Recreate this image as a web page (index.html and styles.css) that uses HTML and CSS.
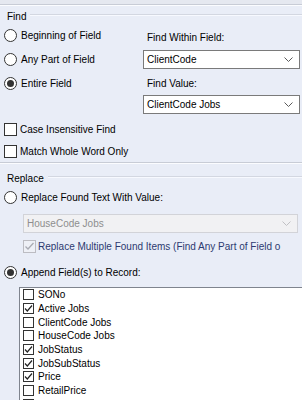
FILE: index.html
```html
<!DOCTYPE html>
<html lang="en">
<head>
  <meta charset="UTF-8" />
  <title>Find and Replace</title>
  <link rel="stylesheet" href="styles.css">
</head>
<body>
  <div class="form">
    <div class="top-strip"></div>
    <div class="etched"></div>

    <!-- Find group -->
    <div class="group-head find-head"><span>Find</span><span class="head-rule"></span></div>
    <div class="find-grid">
      <div class="options">
        <label class="radio-row"><span class="radio"></span>Beginning of Field</label>
        <label class="radio-row"><span class="radio"></span>Any Part of Field</label>
        <label class="radio-row"><span class="radio on"></span>Entire Field</label>
      </div>
      <div class="field-col">
        <div class="field-label first">Find Within Field:</div>
        <div class="combo">
          <span>ClientCode</span>
          <svg class="chevron" width="9" height="5" viewBox="0 0 9 5"><polyline points="0.5,0.5 4.5,4.5 8.5,0.5" /></svg>
        </div>
        <div class="field-label second">Find Value:</div>
        <div class="combo">
          <span>ClientCode Jobs</span>
          <svg class="chevron" width="9" height="5" viewBox="0 0 9 5"><polyline points="0.5,0.5 4.5,4.5 8.5,0.5" /></svg>
        </div>
      </div>
    </div>

    <div class="find-checks">
      <label class="check-row"><span class="check"></span>Case Insensitive Find</label>
      <label class="check-row"><span class="check"></span>Match Whole Word Only</label>
    </div>

    <div class="etched"></div>

    <!-- Replace group -->
    <div class="group-head replace-head"><span>Replace</span><span class="head-rule"></span></div>
    <label class="radio-row replace-row"><span class="radio"></span>Replace Found Text With Value:</label>
    <div class="combo disabled">
      <span>HouseCode Jobs</span>
      <svg class="chevron" width="9" height="5" viewBox="0 0 9 5"><polyline points="0.5,0.5 4.5,4.5 8.5,0.5" /></svg>
    </div>
    <label class="check-row indent disabled-row">
      <span class="check disabled"><svg width="11" height="11" viewBox="0 0 11 11"><polyline points="1.5,5.5 4,8 9.5,2" /></svg></span>
      Replace Multiple Found Items (Find Any Part of Field o
    </label>
    <label class="radio-row append-row"><span class="radio on"></span>Append Field(s) to Record:</label>

    <div class="field-list">
      <div class="list-item"><span class="box"></span>SONo</div>
      <div class="list-item"><span class="box on"><svg width="9" height="9" viewBox="0 0 9 9"><polyline points="1,4.5 3.3,7 8,1.5" /></svg></span>Active Jobs</div>
      <div class="list-item"><span class="box"></span>ClientCode Jobs</div>
      <div class="list-item"><span class="box"></span>HouseCode Jobs</div>
      <div class="list-item"><span class="box on"><svg width="9" height="9" viewBox="0 0 9 9"><polyline points="1,4.5 3.3,7 8,1.5" /></svg></span>JobStatus</div>
      <div class="list-item"><span class="box on"><svg width="9" height="9" viewBox="0 0 9 9"><polyline points="1,4.5 3.3,7 8,1.5" /></svg></span>JobSubStatus</div>
      <div class="list-item"><span class="box on"><svg width="9" height="9" viewBox="0 0 9 9"><polyline points="1,4.5 3.3,7 8,1.5" /></svg></span>Price</div>
      <div class="list-item"><span class="box"></span>RetailPrice</div>
      <div class="list-item"><span class="box"></span></div>
    </div>
  </div>
</body>
</html>
```

FILE: styles.css
```css
html, body {
  margin: 0;
  height: 400px;
  overflow: hidden;
}
body {
  font-family: "Liberation Sans", Arial, sans-serif;
  font-size: 10px;
  color: #000;
  background: #e9edf7;
}
.form {
  width: 302px;
  height: 400px;
  overflow: hidden;
}
.top-strip {
  height: 4px;
  background: #e5e8f0;
}
.etched {
  border-top: 1px solid #c8ccd6;
  border-bottom: 1px solid #fbfcff;
}
.group-head {
  display: flex;
  align-items: center;
  height: 14px;
  box-sizing: border-box;
  padding: 2px 0 0 7px;
  line-height: 12px;
}
.head-rule {
  flex: 1;
  margin: -4px 0 0 4px;
  border-top: 1px solid #d3d7e1;
  border-bottom: 1px solid #f7f9ff;
}
.find-head {
  margin-top: 3px;
}
.replace-head {
  margin-top: 7px;
}
.find-grid {
  display: grid;
  grid-template-columns: 143px 157px;
  margin-top: 1px;
}
.radio-row, .check-row {
  display: flex;
  align-items: center;
  padding-left: 4px;
  white-space: nowrap;
}
.options .radio-row {
  height: 23px;
}
.options .radio-row:nth-child(2),
.options .radio-row:nth-child(3) {
  padding-top: 1px;
}
.radio {
  width: 13px;
  height: 13px;
  box-sizing: border-box;
  border: 1px solid #333;
  border-radius: 50%;
  background: #fff;
  margin-right: 4px;
  display: flex;
  align-items: center;
  justify-content: center;
  flex: none;
}
.radio.on::after {
  content: "";
  width: 7px;
  height: 7px;
  border-radius: 50%;
  background: #333;
}
.field-label {
  line-height: 12px;
  padding-left: 4px;
}
.field-label.first {
  padding-top: 8px;
  height: 18px;
}
.field-label.second {
  padding-top: 9px;
  height: 17px;
}
.combo {
  height: 19px;
  box-sizing: border-box;
  border: 1px solid #7a7a7a;
  background: #fff;
  display: flex;
  align-items: center;
  justify-content: space-between;
  padding: 0 6px 0 3px;
}
.chevron polyline {
  fill: none;
  stroke: #5a5a5a;
  stroke-width: 1;
}
.find-checks {
  margin-top: 4px;
}
.check-row {
  height: 22px;
}
.check {
  width: 13px;
  height: 13px;
  box-sizing: border-box;
  border: 1px solid #333;
  background: #fff;
  margin-right: 3px;
  flex: none;
  display: flex;
  align-items: center;
  justify-content: center;
}
.replace-row {
  height: 22px;
  margin-top: 1px;
}
.combo.disabled {
  margin: 6px 4px 0 23px;
  background: #f1f1f3;
  border-color: #d2d3d8;
  color: #8e8e8e;
}
.combo.disabled .chevron polyline {
  stroke: #c0c0c4;
}
.check-row.indent {
  padding-left: 23px;
  margin-top: 2px;
}
.disabled-row {
  color: #2d3a70;
}
.check.disabled {
  border-color: #bcbcc2;
  background: #eef0f6;
  margin-right: 2px;
}
.check.disabled polyline {
  fill: none;
  stroke: #a9abb3;
  stroke-width: 1.3;
}
.append-row {
  height: 22px;
  margin-top: 4px;
}
.field-list {
  margin: 4px 0 0 19px;
  border: 1px solid #7f848e;
  border-right: none;
  background: #fff;
  height: 140px;
}
.list-item {
  display: flex;
  align-items: center;
  height: 13.7px;
  padding-left: 3px;
  white-space: nowrap;
}
.box {
  width: 11px;
  height: 11px;
  box-sizing: border-box;
  border: 1px solid #333;
  background: #fff;
  margin-right: 4px;
  display: flex;
  align-items: center;
  justify-content: center;
  flex: none;
}
.box polyline {
  fill: none;
  stroke: #222;
  stroke-width: 1.2;
}
```
